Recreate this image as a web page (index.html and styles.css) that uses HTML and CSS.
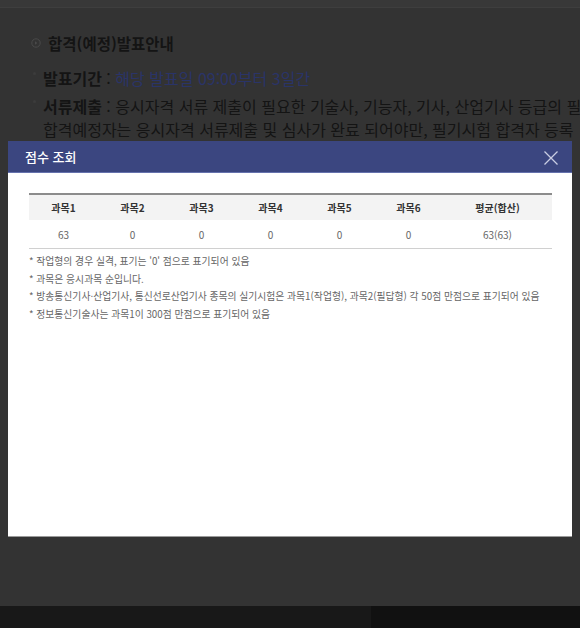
FILE: index.html
```html
<!DOCTYPE html>
<html lang="ko">
<head>
  <meta charset="UTF-8">
  <meta name="viewport" content="width=device-width, initial-scale=1.0">
  <title>점수 조회</title>
  <link rel="stylesheet" href="styles.css">
</head>
<body>
  <div class="page">
    <div class="top-line"></div>

    <section class="notice">
      <h2 class="notice-title">
        <svg class="title-icon" width="10" height="10" viewBox="0 0 10 10">
          <circle cx="5" cy="5" r="4.2" fill="none" stroke="#4a4a4a" stroke-width="1"/>
          <path d="M4 3.2 L6.4 5 L4 6.8 Z" fill="#4a4a4a"/>
        </svg>
        합격(예정)발표안내
      </h2>

      <ul class="notice-list">
        <li class="notice-item">
          <span class="dot"></span>
          <div class="item-text">
            <span class="line"><b>발표기간</b> : <span class="accent">해당 발표일 09:00부터 3일간</span></span>
          </div>
        </li>
        <li class="notice-item">
          <span class="dot"></span>
          <div class="item-text">
            <span class="line"><b>서류제출</b> : 응시자격 서류 제출이 필요한 기술사, 기능자, 기사, 산업기사 등급의 필</span>
            <span class="line">합격예정자는 응시자격 서류제출 및 심사가 완료 되어야만, 필기시험 합격자 등록</span>
          </div>
        </li>
      </ul>
    </section>

    <div class="footer-band"></div>
  </div>

  <!-- score popup -->
  <div class="modal">
    <div class="modal-header">
      <h3 class="modal-title">점수 조회</h3>
      <button class="modal-close" type="button" aria-label="닫기">
        <svg width="16" height="16" viewBox="0 0 16 16">
          <path d="M1.5 1.5 L14.5 14.5 M14.5 1.5 L1.5 14.5" stroke="#c9cde2" stroke-width="1.3" fill="none"/>
        </svg>
      </button>
    </div>

    <div class="modal-body">
      <table class="score-table">
        <colgroup>
          <col class="col-subject"><col class="col-subject"><col class="col-subject">
          <col class="col-subject"><col class="col-subject"><col class="col-subject">
          <col>
        </colgroup>
        <thead>
          <tr>
            <th>과목1</th><th>과목2</th><th>과목3</th><th>과목4</th><th>과목5</th><th>과목6</th><th>평균(합산)</th>
          </tr>
        </thead>
        <tbody>
          <tr>
            <td>63</td><td>0</td><td>0</td><td>0</td><td>0</td><td>0</td><td>63(63)</td>
          </tr>
        </tbody>
      </table>

      <ul class="score-notes">
        <li>* 작업형의 경우 실격, 표기는 '0' 점으로 표기되어 있음</li>
        <li>* 과목은 응시과목 순입니다.</li>
        <li>* 방송통신기사·산업기사, 통신선로산업기사 종목의 실기시험은 과목1(작업형), 과목2(필답형) 각 50점 만점으로 표기되어 있음</li>
        <li>* 정보통신기술사는 과목1이 300점 만점으로 표기되어 있음</li>
      </ul>
    </div>
  </div>
</body>
</html>
```

FILE: styles.css
```css
/* Base */
html, body {
  margin: 0;
  padding: 0;
}

body {
  background: #333;
  font-family: "Noto Sans CJK KR", "Noto Sans", sans-serif;
  overflow: hidden;
}

/* Dimmed page behind the popup */
.page {
  display: flex;
  flex-direction: column;
  min-height: 628px;
}

.top-line {
  height: 7px;
  background: #383838;
  border-bottom: 1px solid #3e3e3e;
}

.notice {
  padding-left: 31px;
  margin-top: 25px;
  color: #141414;
}

.notice-title {
  display: flex;
  align-items: center;
  gap: 7px;
  margin: 0;
  font-size: 15.5px;
  line-height: 20px;
  font-weight: 700;
}

.notice-list {
  list-style: none;
  margin: 14px 0 0;
  padding: 0;
}

.notice-item {
  display: flex;
  margin-bottom: 5px;
}

.dot {
  flex: none;
  width: 3px;
  height: 3px;
  margin: 5px 7px 0 2px;
  border-radius: 50%;
  background: #3c3c3c;
}

.item-text {
  font-size: 16px;
  line-height: 23px;
  white-space: nowrap;
}

.line {
  display: block;
}

.item-text b {
  font-weight: 700;
}

.accent {
  color: #2a3468;
}

.footer-band {
  margin-top: auto;
  height: 22px;
  background: linear-gradient(to right, #181818 0, #181818 64%, #111 64%);
}

/* Popup */
.modal {
  position: fixed;
  left: 8px;
  top: 141px;
  width: 564px;
  height: 395px;
  background: #fff;
  border-bottom: 1px solid #9a9a9a;
}

.modal-header {
  display: flex;
  align-items: center;
  justify-content: space-between;
  height: 31px;
  padding: 0 13px 0 17px;
  background: #3b4680;
  border-bottom: 1px solid #6572ad;
}

.modal-title {
  margin: 0;
  color: #fff;
  font-size: 13px;
  font-weight: 500;
}

.modal-close {
  display: flex;
  padding: 0;
  margin-top: 3px;
  border: 0;
  background: none;
  cursor: pointer;
}

.modal-body {
  padding: 20px 20px 0 21px;
}

.score-table {
  width: 100%;
  border-collapse: collapse;
  table-layout: fixed;
  border-top: 2px solid #8c8c8c;
  font-size: 10px;
}

.col-subject {
  width: 69px;
}

.score-table th {
  height: 25px;
  padding: 0;
  background: #f3f3f3;
  color: #333;
  font-weight: 700;
}

.score-table td {
  height: 28px;
  padding: 0;
  text-align: center;
  color: #666;
  border-bottom: 1px solid #d0d0d0;
}

.score-notes {
  list-style: none;
  margin: 4px 0 0;
  padding: 0;
  font-size: 9.8px;
  line-height: 17.5px;
  color: #666;
}
```
